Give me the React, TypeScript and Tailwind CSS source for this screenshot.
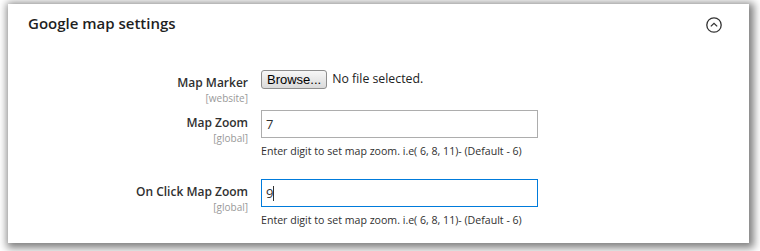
import React from "react";

const font = { fontFamily: '"Open Sans", "Liberation Sans", sans-serif' };

interface FieldRowProps {
  label: string;
  scope: string;
  children: React.ReactNode;
  className?: string;
}

const FieldRow: React.FC<FieldRowProps> = ({ label, scope, children, className }) => (
  <div className={`flex ${className ?? ""}`}>
    <div className="w-[240px] shrink-0 pt-[4px] text-right">
      <div className="text-[12px] leading-[18px] font-semibold text-[#303030]">{label}</div>
      <div className="text-[10px] leading-[12px] text-[#999]">{scope}</div>
    </div>
    <div className="ml-[13px]">{children}</div>
  </div>
);

const HelpText: React.FC<{ children: React.ReactNode }> = ({ children }) => (
  <div className="mt-[6px] text-[10.6px] leading-[14px] text-[#303030]">{children}</div>
);

export default function App() {
  return (
    <div className="w-[760px] h-[251px] bg-white pl-2 pt-1 pr-[11px] pb-2" style={font}>
      <div className="h-full bg-white shadow-[2px_2px_8px_3px_rgba(0,0,0,0.5)]">
        <div className="flex justify-between pl-5 pr-[27px] pt-[8px]">
          <h2 className="text-[15px] leading-[22px] font-semibold text-[#1f1f1f]">
            Google map settings
          </h2>
          <svg width="16" height="16" viewBox="0 0 16 16" className="mt-[5px]">
            <circle cx="8" cy="8" r="7.2" fill="none" stroke="#333" strokeWidth="1.3" />
            <path d="M4.8 9.4 L8 6.3 L11.2 9.4" fill="none" stroke="#333" strokeWidth="1.3" />
          </svg>
        </div>

        <FieldRow label="Map Marker" scope="[website]" className="mt-[36px]">
          <div className="flex items-center">
            <button
              className="h-[19px] px-[5px] rounded-[3px] border border-[#8e8e8e] bg-gradient-to-b from-[#f7f7f7] to-[#dadada] text-[13px] leading-[17px] text-black"
              style={{ fontFamily: '"Liberation Sans", Arial, sans-serif' }}
            >
              Browse...
            </button>
            <span className="ml-[5px] text-[12.3px] text-[#222]">No file selected.</span>
          </div>
        </FieldRow>

        <FieldRow label="Map Zoom" scope="[global]" className="mt-[6px]">
          <div className="w-[277px] h-[28px] border border-[#adadad] pl-[4px] text-[13px] leading-[26px] text-[#303030]">
            7
          </div>
          <HelpText>Enter digit to set map zoom. i.e( 6, 8, 11)- (Default - 6)</HelpText>
        </FieldRow>

        <FieldRow label="On Click Map Zoom" scope="[global]" className="mt-[21px]">
          <div className="flex items-center w-[277px] h-[28px] border border-[#007bdb] pl-[4px] text-[13px] leading-[26px] text-[#303030]">
            9<span className="inline-block w-px h-[15px] bg-[#303030]" />
          </div>
          <HelpText>Enter digit to set map zoom. i.e( 6, 8, 11)- (Default - 6)</HelpText>
        </FieldRow>
      </div>
    </div>
  );
}
